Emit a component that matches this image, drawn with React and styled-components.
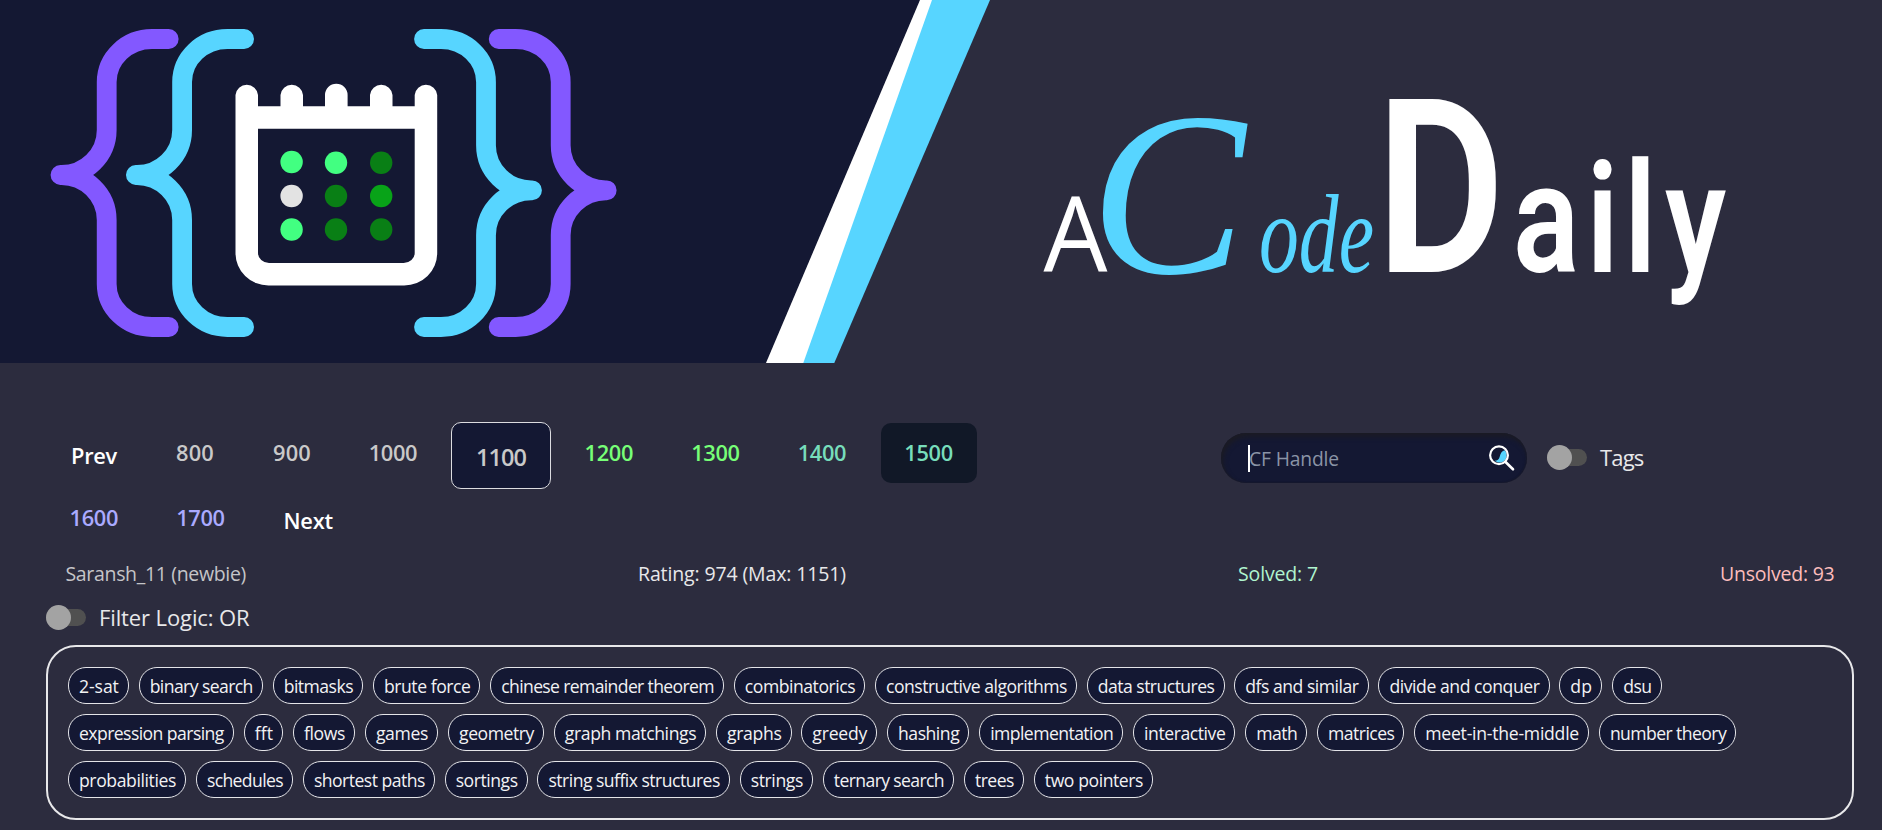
import React, { useLayoutEffect, useRef, useState } from "react";
import styled, { createGlobalStyle } from "styled-components";

const GlobalStyle = createGlobalStyle`
  * { box-sizing: border-box; }
  body {
    margin: 0;
    background: #2c2c3e;
    color: #e8e8ea;
    font-family: "Segoe UI", "Open Sans", "Noto Sans", sans-serif;
    overflow: hidden;
  }
`;

const Page = styled.div`
  height: 830px;
  overflow: hidden;
`;

const Banner = styled.header`
  height: 363px;
  svg { display: block; }
`;

const Controls = styled.div`
  display: flex;
  align-items: flex-start;
  padding: 60px 0 0 46px;
  height: 191px;
`;

const RatingNav = styled.nav`
  width: 1175px;
`;

const NavRow = styled.div`
  display: flex;
  align-items: flex-start;
  gap: 10px;
  height: 65px;
`;

const NavButton = styled.button`
  flex: none;
  width: ${(p) => p.$width}px;
  height: ${(p) => (p.$active ? 67 : 60)}px;
  margin: ${(p) => (p.$active ? "-1px 0 0" : "0")};
  padding: ${(p) => (p.$step ? "4px 0 0" : p.$active ? "2px 0 0" : "0 1px 2px 0")};
  border: ${(p) => (p.$active ? "1px solid #dcdce0" : "0")};
  border-radius: 10px;
  background: ${(p) => (p.$active ? "#141833" : p.$hover ? "#111827" : "transparent")};
  color: ${(p) => p.$color};
  font: 600 ${(p) => (p.$active ? 23.5 : 21.8)}px "Open Sans", sans-serif;
`;

const SearchBox = styled.div`
  display: flex;
  align-items: center;
  width: 306px;
  height: 50px;
  margin-top: 10px;
  padding: 0 12px 0 27px;
  border-radius: 25px;
  background: #141833;
  box-shadow: inset 2px 4px 5px #1b1b24, inset 0 0 2px #1b1b24;
`;

const Caret = styled.span`
  width: 2px;
  height: 27px;
  margin-right: -1px;
  background: #fff;
`;

const Placeholder = styled.span`
  flex: 1;
  color: #8b94a6;
  font-size: 19.3px;
  line-height: 30px;
  padding-top: 1px;
`;

const ToggleLabel = styled.label`
  display: flex;
  align-items: center;
  gap: 13px;
  height: 30px;
  margin: ${(p) => p.$margin};
  font-size: 22px;
  line-height: 30px;
`;

const Track = styled.span`
  display: flex;
  align-items: center;
  width: 40px;
  height: 17px;
  border-radius: 9px;
  background: #505050;
`;

const Thumb = styled.span`
  flex: none;
  width: 25px;
  height: 25px;
  border-radius: 50%;
  background: #a3a3a3;
`;

const Stats = styled.div`
  display: grid;
  grid-template-columns: 572.5px 600px 482px 1fr;
  height: 40px;
  padding-left: 65.5px;
  font-size: 19.5px;
  line-height: 40px;
`;

const Stat = styled.span`
  color: ${(p) => p.$color};
`;

const TagPanel = styled.section`
  display: flex;
  flex-direction: column;
  gap: 10px;
  width: 1808px;
  height: 175px;
  margin: 13px 0 0 46px;
  padding: 20px;
  border: 2px solid #e8e8ea;
  border-radius: 30px;
`;

const TagRow = styled.div`
  display: flex;
  gap: 9.8px;
  height: 37px;
`;

const Tag = styled.button`
  flex: none;
  display: flex;
  width: ${(p) => p.$width}px;
  height: 37px;
  padding: 0 0 0 10px;
  border: 1px solid #e4e4e8;
  border-radius: 18px;
  background: #141833;
  color: #f2f2f4;
  font: 17.6px/37px "Open Sans", sans-serif;
`;

const FitSpan = styled.span`
  display: inline-block;
  white-space: nowrap;
`;

/* Tracks a label in or out so that it spans a given width. */
function Fit({ width, children }) {
  const ref = useRef(null);
  const [spacing, setSpacing] = useState(0);
  useLayoutEffect(() => {
    const natural = ref.current.getBoundingClientRect().width;
    setSpacing((width - natural) / children.length);
  }, [width, children]);
  return (
    <FitSpan ref={ref} style={{ letterSpacing: `${spacing}px` }}>
      {children}
    </FitSpan>
  );
}

const GREY = "#c9c9c9";
const GREEN = "#77ff77";
const TEAL = "#77ddbb";
const VIOLET = "#aaaaff";

const navRows = [
  [
    { label: "Prev", width: 96, text: 46, color: "#fff", step: true },
    { label: "800", width: 87, text: 38, color: GREY },
    { label: "900", width: 87, text: 38, color: GREY },
    { label: "1000", width: 95, text: 48.5, color: GREY },
    { label: "1100", width: 100, text: 50, color: GREY, active: true },
    { label: "1200", width: 96.6, text: 48.5, color: GREEN },
    { label: "1300", width: 96.6, text: 48.5, color: GREEN },
    { label: "1400", width: 96.6, text: 48.5, color: TEAL },
    { label: "1500", width: 96.6, text: 48.5, color: TEAL, hover: true },
  ],
  [
    { label: "1600", width: 96.6, text: 48.5, color: VIOLET },
    { label: "1700", width: 96.6, text: 48.5, color: VIOLET },
    { label: "Next", width: 98, text: 49.5, color: "#fff", step: true },
  ],
];

const tagRows = [
  [
    ["2-sat", 60.2], ["binary search", 123.5], ["bitmasks", 89.8], ["brute force", 106.8],
    ["chinese remainder theorem", 233.1], ["combinatorics", 130.6],
    ["constructive algorithms", 201.4], ["data structures", 137], ["dfs and similar", 133.6],
    ["divide and conquer", 170.4], ["dp", 42.4], ["dsu", 48.8],
  ],
  [
    ["expression parsing", 165.2], ["fft", 38.8], ["flows", 61.4], ["games", 72.7],
    ["geometry", 95.3], ["graph matchings", 151.7], ["graphs", 74.8], ["greedy", 75.2],
    ["hashing", 81.6], ["implementation", 143.5], ["interactive", 101.6], ["math", 61.4],
    ["matrices", 86.7], ["meet-in-the-middle", 174.1], ["number theory", 136.7],
  ],
  [
    ["probabilities", 117.4], ["schedules", 96.5], ["shortest paths", 131.3],
    ["sortings", 82.3], ["string suffix structures", 191.7], ["strings", 72.7],
    ["ternary search", 130.6], ["trees", 59.4], ["two pointers", 118.6],
  ],
];

const LEFT_BRACE =
  "M168.7 39H152A45.3 43 0 0 0 106.7 82V130A45.3 45 0 0 1 60.5 175A45.3 45 0 0 1 106.7 220V284A45.3 43 0 0 0 152 327H168.7";
const RIGHT_BRACE =
  "M424 39H441A45 43 0 0 1 486 82V145.3A45.3 45 0 0 0 532 190.3A45.3 45 0 0 0 486 235.3V284A45 43 0 0 1 441 327H424";

const dots = [
  [291.6, 162, "#42ff81"], [336, 162.7, "#42ff81"], [381.2, 162.7, "#097f15"],
  [291.6, 196, "#e3e3e3"], [336, 196, "#097f15"], [381.2, 196, "#08a318"],
  [291.6, 229.5, "#42ff81"], [336, 229.5, "#097f15"], [381.2, 229.5, "#097f15"],
];

function BannerArt() {
  return (
    <svg width="1882" height="363" viewBox="0 0 1882 363">
      <path d="M0 0H920L766 363H0Z" fill="#141833" />
      <path d="M920 0H934L805 363H766Z" fill="#fff" />
      <path d="M932 0H990L834.3 363H803.3Z" fill="#57d5ff" />
      <g fill="none" strokeWidth="19.8" strokeLinecap="round" strokeLinejoin="round">
        <path d={LEFT_BRACE} stroke="#8358ff" />
        <path d={LEFT_BRACE} stroke="#57d5ff" transform="translate(75.4 0)" />
        <path d={RIGHT_BRACE} stroke="#57d5ff" />
        <path d={RIGHT_BRACE} stroke="#8358ff" transform="translate(74.7 0)" />
      </g>
      <path
        fill="#fff"
        fillRule="evenodd"
        d="M235.5 95A11.3 11.3 0 0 1 258 95V106.3H280.5V95A11.3 11.3 0 0 1 303 95V106.3H325V95A11.3 11.3 0 0 1 347.6 95V106.3H370V95A11.3 11.3 0 0 1 392.5 95V106.3H414.7V95A11.3 11.3 0 0 1 437.2 95V253A33 32.6 0 0 1 404.2 285.6H268.5A33 32.6 0 0 1 235.5 253ZM258 128.7V253A11 10 0 0 0 269 263H403.7A11 10 0 0 0 414.7 253V128.7Z"
      />
      {dots.map(([x, y, fill]) => (
        <ellipse key={`${x}-${y}`} cx={x} cy={y} rx="11.2" ry="11.3" fill={fill} />
      ))}
      <text x="1043.5" y="271.5" fontFamily="Open Sans" fontWeight="500" fontSize="103.5" fill="#fff" textLength="64" lengthAdjust="spacingAndGlyphs">A</text>
      <g fill="#57d5ff" fontFamily="Liberation Serif" fontStyle="italic">
        <text x="1090" y="273" fontSize="233">C</text>
        <text x="1259" y="271.5" fontSize="112" textLength="115" lengthAdjust="spacingAndGlyphs">ode</text>
      </g>
      <g fill="#fff" fontFamily="Roboto">
        <text x="1376" y="271.5" fontWeight="600" fontSize="243" textLength="129" lengthAdjust="spacingAndGlyphs">D</text>
        <text transform="translate(1513 271.5) scale(.8 1)" x="0 92 139 190" y="0" fontWeight="600" fontSize="154">aily</text>
      </g>
    </svg>
  );
}

function SearchIcon() {
  return (
    <svg width="28" height="28" viewBox="0 0 28 28" fill="none">
      <path d="M17.6 6.2C20.2 9 20.3 13.5 17.8 16.2C15.1 19 11 19.5 7.8 16.8C10.5 16.7 12 15.2 12.7 12.7C13.4 9.8 14.3 7.3 17.6 6.2Z" fill="#57d5ff" />
      <circle cx="12" cy="11.3" r="8.9" stroke="#fff" strokeWidth="2.2" />
      <path d="M18.3 17.8L26 25.3" stroke="#fff" strokeWidth="2.6" strokeLinecap="round" />
    </svg>
  );
}

function Toggle({ label, width, margin }) {
  return (
    <ToggleLabel $margin={margin}>
      <Track><Thumb /></Track>
      <Fit width={width}>{label}</Fit>
    </ToggleLabel>
  );
}

export default function App() {
  return (
    <Page>
      <GlobalStyle />
      <Banner><BannerArt /></Banner>
      <Controls>
        <RatingNav>
          {navRows.map((row, i) => (
            <NavRow key={i}>
              {row.map((b) => (
                <NavButton key={b.label} $width={b.width} $color={b.color} $active={b.active} $hover={b.hover} $step={b.step}>
                  <Fit width={b.text}>{b.label}</Fit>
                </NavButton>
              ))}
            </NavRow>
          ))}
        </RatingNav>
        <SearchBox>
          <Caret />
          <Placeholder><Fit width={90}>CF Handle</Fit></Placeholder>
          <SearchIcon />
        </SearchBox>
        <Toggle label="Tags" width={43.5} margin="19px 0 0 20px" />
      </Controls>
      <Stats>
        <Stat $color="#c5c5c8"><Fit width={180.5}>Saransh_11 (newbie)</Fit></Stat>
        <Stat $color="#e8e8ea"><Fit width={208}>Rating: 974 (Max: 1151)</Fit></Stat>
        <Stat $color="#b0f5cf"><Fit width={80}>Solved: 7</Fit></Stat>
        <Stat $color="#fdbcbc"><Fit width={114.5}>Unsolved: 93</Fit></Stat>
      </Stats>
      <Toggle label="Filter Logic: OR" width={150.5} margin="8px 0 0 46px" />
      <TagPanel>
        {tagRows.map((row, i) => (
          <TagRow key={i}>
            {row.map(([name, width]) => (
              <Tag key={name} $width={width + 0.7}>
                <Fit width={width - 20.4}>{name}</Fit>
              </Tag>
            ))}
          </TagRow>
        ))}
      </TagPanel>
    </Page>
  );
}
